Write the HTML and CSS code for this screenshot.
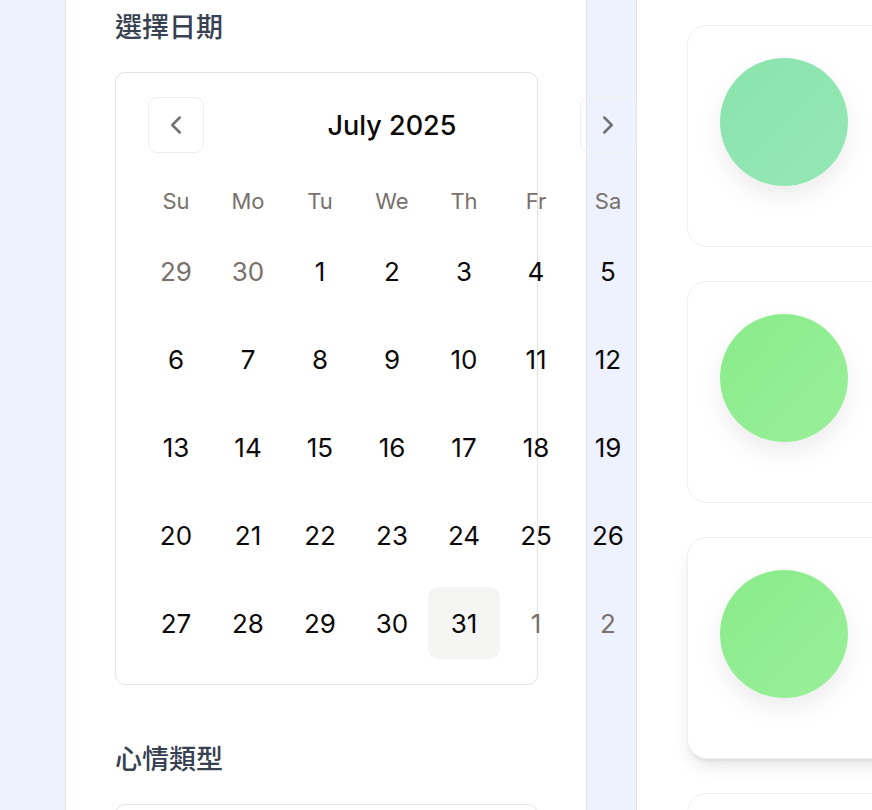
FILE: index.html
```html
<html>
<head>
  <link rel="stylesheet" href="styles.css">
</head>
<body>
  <div class="layout">
    <aside class="form-panel">
      <section class="field">
        <h2 class="field-title">選擇日期</h2>
        <div class="calendar">
          <div class="cal-nav">
            <button class="nav-btn">
              <svg width="30" height="30" viewBox="0 0 24 24" fill="none" stroke="currentColor" stroke-width="2" stroke-linecap="round" stroke-linejoin="round"><path d="m15 18-6-6 6-6"/></svg>
            </button>
            <div class="cal-caption">July 2025</div>
            <button class="nav-btn">
              <svg width="30" height="30" viewBox="0 0 24 24" fill="none" stroke="currentColor" stroke-width="2" stroke-linecap="round" stroke-linejoin="round"><path d="m9 18 6-6-6-6"/></svg>
            </button>
          </div>
          <div class="cal-grid">
            <div class="weekday">Su</div>
            <div class="weekday">Mo</div>
            <div class="weekday">Tu</div>
            <div class="weekday">We</div>
            <div class="weekday">Th</div>
            <div class="weekday">Fr</div>
            <div class="weekday">Sa</div>

            <div class="day outside">29</div>
            <div class="day outside">30</div>
            <div class="day">1</div>
            <div class="day">2</div>
            <div class="day">3</div>
            <div class="day">4</div>
            <div class="day">5</div>

            <div class="day">6</div>
            <div class="day">7</div>
            <div class="day">8</div>
            <div class="day">9</div>
            <div class="day">10</div>
            <div class="day">11</div>
            <div class="day">12</div>

            <div class="day">13</div>
            <div class="day">14</div>
            <div class="day">15</div>
            <div class="day">16</div>
            <div class="day">17</div>
            <div class="day">18</div>
            <div class="day">19</div>

            <div class="day">20</div>
            <div class="day">21</div>
            <div class="day">22</div>
            <div class="day">23</div>
            <div class="day">24</div>
            <div class="day">25</div>
            <div class="day">26</div>

            <div class="day">27</div>
            <div class="day">28</div>
            <div class="day">29</div>
            <div class="day">30</div>
            <div class="day today">31</div>
            <div class="day outside">1</div>
            <div class="day outside">2</div>
          </div>
        </div>
      </section>

      <section class="field field-mood">
        <h2 class="field-title">心情類型</h2>
        <div class="mood-box"></div>
      </section>
    </aside>

    <main class="entries">
      <div class="entry-card"><div class="mood-dot mint"></div></div>
      <div class="entry-card"><div class="mood-dot green"></div></div>
      <div class="entry-card raised"><div class="mood-dot green"></div></div>
      <div class="entry-card"><div class="mood-dot green"></div></div>
    </main>
  </div>
</body>
</html>
```

FILE: styles.css
```css
/* 页面基础 */
body {
  margin: 0;
  height: 810px;
  overflow: hidden;
  background-color: #eef2ff;
  font-family: "Inter", "Noto Sans CJK TC", sans-serif;
}

/* 整体布局 */
.layout {
  display: flex;
  gap: 49px;
  padding-left: 65px;
  height: 810px;
}

/* 左侧表单面板 */
.form-panel {
  flex-shrink: 0;
  width: 522px;
  box-sizing: border-box;
  padding: 8px 48px 0 49px;
  background-color: #fff;
  border-left: 1px solid #e2e4e8;
  border-right: 1px solid #e2e4e8;
}

.field-title {
  margin: 0 0 24px;
  font-size: 27px;
  line-height: 40px;
  font-weight: 500;
  color: #374151;
}

.field-mood {
  margin-top: 55px;
}

/* 日历 */
.calendar {
  width: 423px;
  box-sizing: border-box;
  padding: 24px 24px 25px;
  border: 1px solid #e4e3e2;
  border-radius: 10px;
}

.cal-nav {
  display: flex;
  align-items: center;
  justify-content: space-between;
  width: 488px;
  margin-left: 8px;
  height: 56px;
}

.nav-btn {
  display: flex;
  align-items: center;
  justify-content: center;
  width: 56px;
  height: 56px;
  padding: 0;
  border: 1px solid #f0efee;
  border-radius: 9px;
  background: transparent;
  color: #737373;
}

.cal-caption {
  font-size: 27px;
  font-weight: 500;
  color: #0c0a09;
}

.cal-grid {
  display: grid;
  grid-template-columns: repeat(7, 72px);
  grid-template-rows: 36px;
  grid-auto-rows: 72px;
  row-gap: 16px;
  width: 504px;
  margin-top: 30px;
}

.weekday {
  display: flex;
  align-items: center;
  justify-content: center;
  font-size: 22px;
  color: #78716c;
}

.day {
  display: flex;
  align-items: center;
  justify-content: center;
  font-size: 26px;
  color: #0c0a09;
  border-radius: 10px;
}

.day.outside {
  color: #78716c;
}

.day.today {
  background-color: #f5f5f4;
}

.mood-box {
  height: 120px;
  border: 1px solid #e4e3e2;
  border-radius: 10px;
}

/* 右侧记录列表 */
.entries {
  flex-shrink: 0;
  width: 600px;
  box-sizing: border-box;
  padding: 25px 0 0 50px;
  background-color: #fff;
  border-left: 1px solid #e2e4e8;
  display: flex;
  flex-direction: column;
  gap: 34px;
}

.entry-card {
  flex-shrink: 0;
  width: 480px;
  height: 222px;
  box-sizing: border-box;
  padding: 32px;
  border: 1px solid #f0f0f0;
  border-radius: 20px;
  background-color: #fff;
}

.entry-card.raised {
  box-shadow: 0 10px 15px -3px rgba(0, 0, 0, 0.1), 0 4px 6px -4px rgba(0, 0, 0, 0.1);
}

.mood-dot {
  width: 128px;
  height: 128px;
  border-radius: 50%;
  box-shadow: 0 10px 25px rgba(0, 0, 0, 0.08);
}

.mood-dot.mint {
  background: linear-gradient(135deg, #8ae3ad, #95e8b5);
}

.mood-dot.green {
  background: linear-gradient(135deg, #8aeb8a, #99f09a);
}
```
